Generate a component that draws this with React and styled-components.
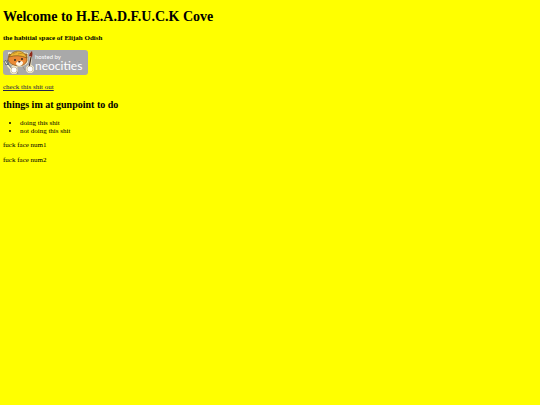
import React from "react";
import styled, { createGlobalStyle } from "styled-components";

const GlobalStyle = createGlobalStyle`
  body {
    margin: 0;
    background-color: #ffff00;
    color: #000000;
    font-family: "Liberation Serif", "Times New Roman", serif;
    font-size: 7px;
    line-height: 8px;
  }
`;

const Page = styled.main`
  padding: 9px 3px;
`;

const Title = styled.h1`
  margin: 0 0 9px;
  font-size: 14px;
  line-height: 16px;
`;

const Tagline = styled.h4`
  margin: 0 0 8px;
  font-size: 7px;
`;

const Heading = styled.h2`
  margin: 0 0 8px;
  padding-top: 1px;
  font-size: 10px;
  line-height: 12px;
`;

const BadgeLink = styled.a`
  display: block;
  width: fit-content;
  margin-bottom: 8px;
`;

const BadgeSvg = styled.svg`
  display: block;
  width: 85px;
  height: 25px;
`;

const BadgeText = styled.text`
  fill: #ffffff;
  font-family: Lato, "Open Sans", sans-serif;
  font-size: ${(props) => (props.$small ? "6px" : "12px")};
`;

const Paragraph = styled.p`
  margin: 0 0 7px;
`;

const TextLink = styled.a`
  color: #24244c;
  text-decoration: underline;
`;

const List = styled.ul`
  margin: 0 0 6px;
  padding-left: 17px;
`;

function NeocitiesBadge() {
  return (
    <BadgeSvg viewBox="0 0 85 25" role="img" aria-label="hosted by neocities">
      <rect width="85" height="25" rx="3" fill="#a9a9a9" />
      {/* pale outline behind the cat */}
      <g stroke="#fff6d0" strokeWidth="2" strokeLinejoin="round" strokeLinecap="round" fill="#fff6d0">
        <path d="M6 10L6 3L10 4Q15 0 20 3L24 4L24 12Q21 16 15 16Q7 15 6 10Z" />
        <path d="M2 12L10 21M28 3L27 18" />
        <circle cx="11" cy="20" r="3" />
        <circle cx="27" cy="19" r="3" />
      </g>
      {/* fork */}
      <path d="M1 11L3 15L6 14L4 10M2 10L5 14L10 20" fill="none" stroke="#606870" strokeWidth="1" />
      {/* brush */}
      <path d="M28 7L26 18" stroke="#4a3427" strokeWidth="1.3" />
      <path d="M26 6Q26 3 29 1Q30 4 29 7Z" fill="#8d281a" />
      {/* head */}
      <path d="M5 10L6 4L10 5Q15 1 20 4L24 4L24 11Q22 16 15 16Q7 15 5 10Z" fill="#ea8a35" stroke="#6d4817" strokeWidth="0.7" />
      <path d="M6 7Q9 1 16 1Q22 2 24 8Q15 4 6 7Z" fill="#edb735" stroke="#7b551a" strokeWidth="0.7" />
      <path d="M10 4L14 2M15 4L20 3" stroke="#a9781d" strokeWidth="0.6" />
      <path d="M13 13Q16 9 20 12Q20 16 16 16Q13 16 13 13Z" fill="#fff7e5" />
      <circle cx="12" cy="10" r="1" fill="#33291c" />
      <circle cx="19" cy="9" r="1" fill="#33291c" />
      <path d="M15 11H18L16 13Z" fill="#4b2a20" />
      {/* paws */}
      <path d="M14 18Q13 21 15 24M20 17L22 20" fill="none" stroke="#8b806a" strokeWidth="0.7" />
      <circle cx="11" cy="20" r="3" fill="#ffffff" stroke="#a08e68" strokeWidth="0.5" />
      <circle cx="27" cy="19" r="3" fill="#ffffff" stroke="#a08e68" strokeWidth="0.5" />
      <BadgeText $small x="32" y="9">hosted by</BadgeText>
      <BadgeText x="32" y="20">neocities</BadgeText>
    </BadgeSvg>
  );
}

function App() {
  return (
    <>
      <GlobalStyle />
      <Page>
        <Title>Welcome to H.E.A.D.F.U.C.K Cove</Title>
        <Tagline>the habitial space of Elijah Odish</Tagline>
        <BadgeLink href="#neocities">
          <NeocitiesBadge />
        </BadgeLink>
        <Paragraph>
          <TextLink href="#check">check this shit out</TextLink>
        </Paragraph>
        <Heading>things im at gunpoint to do</Heading>
        <List>
          <li>doing this shit</li>
          <li>not doing this shit</li>
        </List>
        <Paragraph>fuck face num1</Paragraph>
        <Paragraph>fuck face num2</Paragraph>
      </Page>
    </>
  );
}

export default App;
